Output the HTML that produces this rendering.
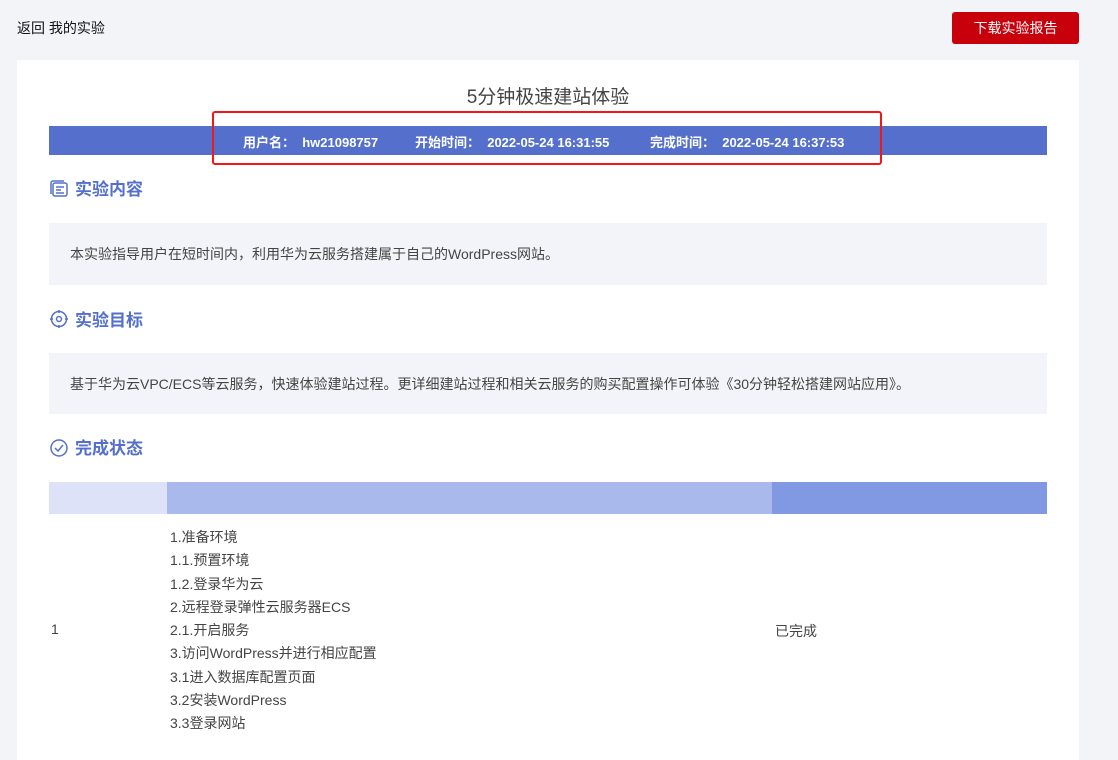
<!DOCTYPE html>
<html><head><meta charset="utf-8"><style>
body{margin:0;width:1118px;height:750px;overflow:hidden;background:#f3f4f7;font-family:"Liberation Sans","Noto Sans CJK SC",sans-serif;color:#333;position:relative}
.a{position:absolute}
.t{font-size:14px;white-space:nowrap}
</style></head><body>
<div class="a t" style="left:17px;top:18px;color:#111">返回 我的实验</div>
<div class="a" style="left:952px;top:12px;width:127px;height:32px;background:#c7000b;border-radius:3px;color:#fff;font-size:14px;text-align:center;line-height:32px">下载实验报告</div>
<div class="a" style="left:17px;top:60px;width:1062px;height:700px;background:#fff"></div>
<div class="a" style="left:0;top:82px;width:1096px;text-align:center;font-size:19px;color:#444">5分钟极速建站体验</div>
<div class="a" style="left:49px;top:126px;width:998px;height:29px;background:#5470cc"></div>
<div class="a t" style="left:243px;top:132px;color:#fff;font-size:13px;font-weight:bold">用户名：&nbsp; hw21098757</div>
<div class="a t" style="left:415px;top:132px;color:#fff;font-size:13px;font-weight:bold">开始时间：&nbsp; 2022-05-24 16:31:55</div>
<div class="a t" style="left:650px;top:132px;color:#fff;font-size:13px;font-weight:bold">完成时间：&nbsp; 2022-05-24 16:37:53</div>
<div class="a" style="left:212px;top:111px;width:670px;height:54px;border:2px solid #f01818;border-radius:3px;box-sizing:border-box"></div>

<svg class="a" style="left:49px;top:179px" width="20" height="20" viewBox="0 0 20 20" fill="none" stroke="#5470cc" stroke-width="1.5"><rect x="4" y="4" width="14" height="13" rx="2"/><path d="M2 15V4a2 2 0 0 1 2-2h11"/><path d="M7 8h8M7 11h5M7 14h8"/></svg>
<div class="a" style="left:75px;top:175px;font-size:17px;font-weight:bold;color:#5470cc">实验内容</div>
<div class="a" style="left:49px;top:223px;width:998px;height:62px;background:#f3f4f9"></div>
<div class="a t" style="left:70px;top:244px;color:#444">本实验指导用户在短时间内，利用华为云服务搭建属于自己的WordPress网站。</div>

<svg class="a" style="left:49px;top:309px" width="20" height="20" viewBox="0 0 20 20" fill="none" stroke="#5470cc" stroke-width="1.5"><circle cx="10" cy="10" r="7.5"/><circle cx="10" cy="10" r="2.5"/><path d="M10 1v3M10 16v3M1 10h3M16 10h3"/></svg>
<div class="a" style="left:75px;top:306px;font-size:17px;font-weight:bold;color:#5470cc">实验目标</div>
<div class="a" style="left:49px;top:353px;width:998px;height:61px;background:#f3f4f9"></div>
<div class="a t" style="left:70px;top:374px;color:#444">基于华为云VPC/ECS等云服务，快速体验建站过程。更详细建站过程和相关云服务的购买配置操作可体验《30分钟轻松搭建网站应用》。</div>

<svg class="a" style="left:49px;top:438px" width="20" height="20" viewBox="0 0 20 20" fill="none" stroke="#5470cc" stroke-width="1.5"><circle cx="10" cy="10" r="8"/><path d="M6 10l3 3 5-6"/></svg>
<div class="a" style="left:75px;top:434px;font-size:17px;font-weight:bold;color:#5470cc">完成状态</div>
<div class="a" style="left:49px;top:482px;width:118px;height:32px;background:#dde2f8"></div>
<div class="a" style="left:167px;top:482px;width:605px;height:32px;background:#aab9ec"></div>
<div class="a" style="left:772px;top:482px;width:275px;height:32px;background:#8198e2"></div>
<div class="a t" style="left:51px;top:621px;color:#444">1</div>
<div class="a t" style="left:775px;top:621px;color:#444">已完成</div>
<div class="a" style="left:170px;top:526px;font-size:14px;line-height:23.3px;color:#444">1.准备环境<br>1.1.预置环境<br>1.2.登录华为云<br>2.远程登录弹性云服务器ECS<br>2.1.开启服务<br>3.访问WordPress并进行相应配置<br>3.1进入数据库配置页面<br>3.2安装WordPress<br>3.3登录网站</div>
</body></html>
